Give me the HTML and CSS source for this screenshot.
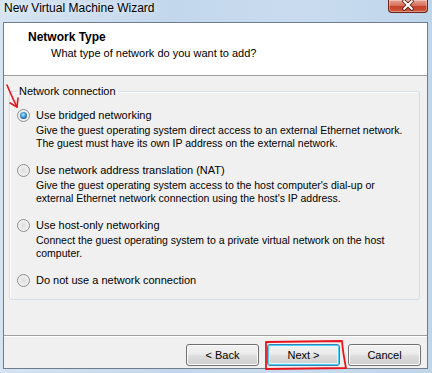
FILE: index.html
```html
<!DOCTYPE html>
<html>
<head>
<meta charset="utf-8">
<link rel="stylesheet" href="styles.css">
</head>
<body>
<div class="window">
  <div class="titlebar">
    <span class="title">New Virtual Machine Wizard</span>
    <div class="close">
      <svg width="40" height="13" viewBox="0 0 40 13">
        <path d="M16 2 L24 10 M24 2 L16 10" stroke="#5a1f16" stroke-width="4" stroke-linecap="round"/>
        <path d="M16 2 L24 10 M24 2 L16 10" stroke="#ffffff" stroke-width="2.2" stroke-linecap="round"/>
      </svg>
    </div>
  </div>
  <div class="client">
    <div class="header">
      <div class="h-title">Network Type</div>
      <div class="h-sub">What type of network do you want to add?</div>
    </div>
    <div class="body">
      <fieldset class="group">
        <legend>Network connection</legend>
        <div class="option">
          <div class="radio-row"><span class="radio checked"></span><span>Use bridged networking</span></div>
          <div class="desc">Give the guest operating system direct access to an external Ethernet network.<br>The guest must have its own IP address on the external network.</div>
        </div>
        <div class="option">
          <div class="radio-row"><span class="radio"></span><span>Use network address translation (NAT)</span></div>
          <div class="desc">Give the guest operating system access to the host computer's dial-up or<br>external Ethernet network connection using the host's IP address.</div>
        </div>
        <div class="option">
          <div class="radio-row"><span class="radio"></span><span>Use host-only networking</span></div>
          <div class="desc">Connect the guest operating system to a private virtual network on the host<br>computer.</div>
        </div>
        <div class="option">
          <div class="radio-row"><span class="radio"></span><span>Do not use a network connection</span></div>
        </div>
      </fieldset>
    </div>
    <div class="footer">
      <button class="btn">&lt; Back</button>
      <button class="btn default">Next &gt;</button>
      <button class="btn">Cancel</button>
    </div>
  </div>
  <svg class="annot arrow" width="24" height="30" viewBox="0 0 24 30">
    <path d="M2 2 Q6 12 12 24" stroke="#e8141a" stroke-width="1.6" fill="none" stroke-linecap="round"/>
    <path d="M5 20 L12 24 L13 15" stroke="#e8141a" stroke-width="1.6" fill="none" stroke-linecap="round" stroke-linejoin="round"/>
  </svg>
  <svg class="annot box" width="84" height="32" viewBox="0 0 84 32">
    <path d="M2 3 L78 2 Q79 14 82 29 L2 30 Z" stroke="#e8141a" stroke-width="1.8" fill="none" stroke-linejoin="round"/>
  </svg>
</div>
</body>
</html>
```

FILE: styles.css
```css
* { box-sizing: border-box; }
html, body { margin: 0; padding: 0; }
body { width: 432px; height: 373px; overflow: hidden; }

.window {
  position: relative;
  width: 432px;
  height: 373px;
  background: linear-gradient(90deg, #d6e4f2 0%, #c3d7ec 40%, #c9dcef 70%, #bfd5ea 100%);
  display: flex;
  flex-direction: column;
  font-family: "Liberation Sans", Arial, sans-serif;
  font-size: 10.5px;
  color: #000;
}

.titlebar {
  height: 22px;
  display: flex;
  align-items: flex-start;
  padding-left: 4px;
}
.title {
  font-size: 12px;
  line-height: 16px;
  font-family: "Liberation Sans", Arial, sans-serif;
  color: #000;
  text-shadow: 0 0 6px rgba(255,255,255,0.9);
}
.close {
  margin-left: auto;
  margin-right: 4px;
  width: 40px;
  height: 13px;
  border: 1px solid #6d2418;
  border-top: none;
  border-radius: 0 0 4px 4px;
  background: linear-gradient(180deg, #e7a292 0%, #d8735f 45%, #c4402a 55%, #cf5a3f 100%);
  box-shadow: inset 0 0 0 1px rgba(255,255,255,0.35);
  display: flex;
}
.close svg { display: block; margin-top: -1px; }

.client {
  margin: 0 4px 4px 3px;
  flex: 1;
  border: 1px solid #6e7c8c;
  background: #f0f0f0;
  display: flex;
  flex-direction: column;
}

.header {
  height: 53px;
  background: #fff;
  border-bottom: 1px solid #a0a0a0;
  padding: 7px 0 0 24px;
  white-space: nowrap;
}
.h-title {
  font-weight: bold;
  font-size: 12px;
  line-height: 14px;
}
.h-sub {
  font-size: 11px;
  line-height: 14px;
  margin-top: 2px;
  padding-left: 23px;
}

.body {
  height: 260px;
  border-bottom: 1px solid #a0a0a0;
  padding: 8px 7px 0 5px;
}

.group {
  margin: 0;
  padding: 10px 7px 12px 7px;
  border: 1px solid #d5dfe5;
  border-radius: 3px;
  box-shadow: inset 1px 1px 0 #fff;
  white-space: nowrap;
}
.group legend {
  padding: 0 2px;
  line-height: 14px;
  font-size: 11px;
}

.option + .option { margin-top: 13px; }
.radio-row {
  display: flex;
  align-items: center;
  gap: 6px;
  height: 14px;
  line-height: 14px;
  font-size: 11px;
}
.radio {
  width: 13px;
  height: 13px;
  border-radius: 50%;
  border: 1px solid #8c8e90;
  background: radial-gradient(circle at 50% 50%, #dcdcdc 0%, #e9e9e9 40%, #f7f7f7 100%);
  position: relative;
  flex: none;
}
.radio.checked::after {
  content: "";
  position: absolute;
  left: 2px;
  top: 2px;
  width: 7px;
  height: 7px;
  border-radius: 50%;
  background: radial-gradient(circle at 45% 40%, #b9e6fb 0%, #3d94cf 45%, #1b4f83 80%, #173c63 100%);
}
.desc {
  margin-top: 2px;
  padding-left: 19px;
  line-height: 13px;
}

.footer {
  flex: 1;
  border-top: 1px solid #fff;
  display: flex;
  justify-content: flex-end;
  align-items: flex-start;
  gap: 8px;
  padding: 7px 6px 0 0;
}
.btn {
  width: 73px;
  height: 22px;
  font-family: "Liberation Sans", Arial, sans-serif;
  font-size: 11px;
  color: #000;
  border: 1px solid #707070;
  border-radius: 3px;
  background: linear-gradient(180deg, #f2f2f2 0%, #ebebeb 45%, #dddddd 55%, #cfcfcf 100%);
  box-shadow: inset 0 0 0 1px #fcfcfc;
  padding: 0;
}
.btn.default {
  border-color: #3c7fb1;
  box-shadow: inset 0 0 0 1px #48d0f9, inset 0 0 0 2px #e6f6fd;
}

.annot { position: absolute; }
.arrow { left: 5px; top: 83px; }
.box { left: 264px; top: 339px; }
```
